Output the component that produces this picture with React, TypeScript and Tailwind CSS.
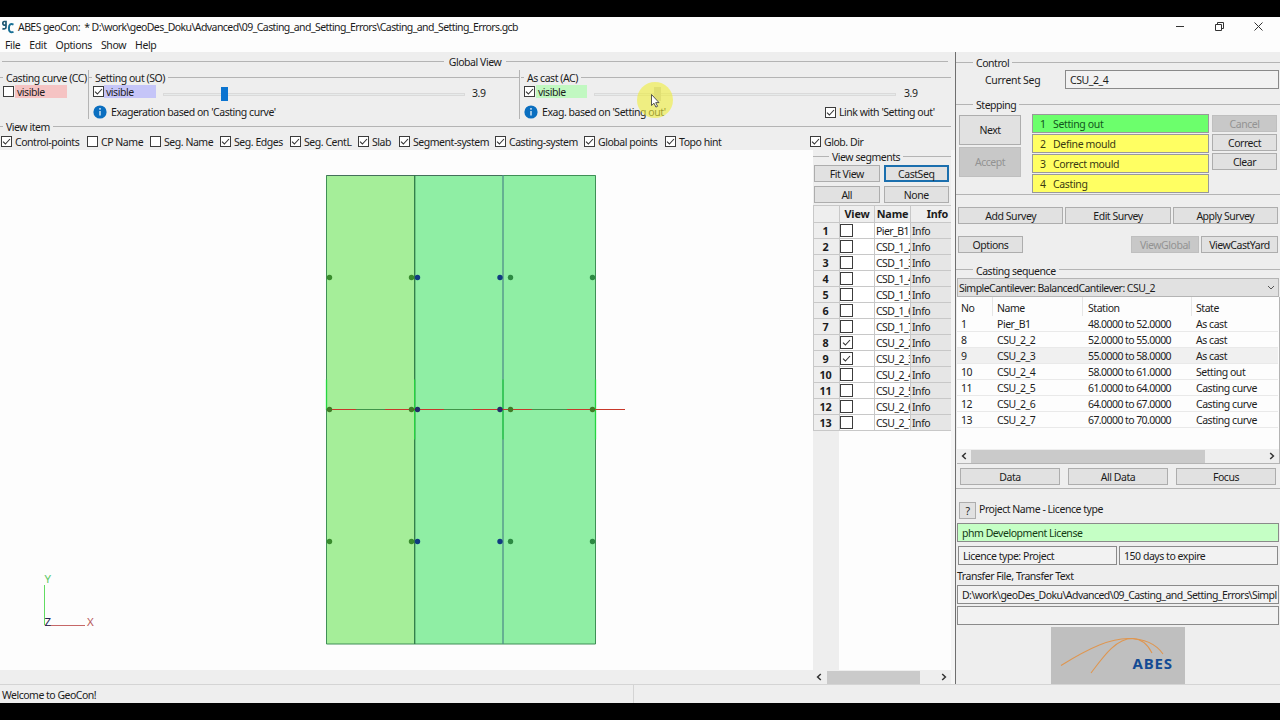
import type { ReactNode } from "react";
import clsx from "clsx";

const viewItems = [
  { label: "Control-points", on: true, width: "w-[86px]" },
  { label: "CP Name", on: false, width: "w-[63px]" },
  { label: "Seg. Name", on: false, width: "w-[70px]" },
  { label: "Seg. Edges", on: true, width: "w-[70px]" },
  { label: "Seg. CentL", on: true, width: "w-[68px]" },
  { label: "Slab", on: true, width: "w-[41px]" },
  { label: "Segment-system", on: true, width: "w-[96px]" },
  { label: "Casting-system", on: true, width: "w-[89px]" },
  { label: "Global points", on: true, width: "w-[81px]" },
  { label: "Topo hint", on: true, width: "w-[145px]" },
  { label: "Glob. Dir", on: true, width: "w-[80px]" },
];

const segments = [
  { name: "Pier_B1", on: false },
  { name: "CSD_1_2", on: false },
  { name: "CSD_1_3", on: false },
  { name: "CSD_1_4", on: false },
  { name: "CSD_1_5", on: false },
  { name: "CSD_1_6", on: false },
  { name: "CSD_1_7", on: false },
  { name: "CSU_2_2", on: true },
  { name: "CSU_2_3", on: true },
  { name: "CSU_2_4", on: false },
  { name: "CSU_2_5", on: false },
  { name: "CSU_2_6", on: false },
  { name: "CSU_2_7", on: false },
];

const sequence = [
  { no: 1, name: "Pier_B1", station: "48.0000 to 52.0000", state: "As cast" },
  { no: 8, name: "CSU_2_2", station: "52.0000 to 55.0000", state: "As cast" },
  { no: 9, name: "CSU_2_3", station: "55.0000 to 58.0000", state: "As cast" },
  { no: 10, name: "CSU_2_4", station: "58.0000 to 61.0000", state: "Setting out" },
  { no: 11, name: "CSU_2_5", station: "61.0000 to 64.0000", state: "Casting curve" },
  { no: 12, name: "CSU_2_6", station: "64.0000 to 67.0000", state: "Casting curve" },
  { no: 13, name: "CSU_2_7", station: "67.0000 to 70.0000", state: "Casting curve" },
];

const steps = ["Setting out", "Define mould", "Correct mould", "Casting"];

function Box({ on, className }: { on: boolean; className?: string }) {
  return (
    <span className={clsx("flex shrink-0 items-center justify-center border border-[#3c3c3c] bg-white", className ?? "h-[11px] w-[11px]")}>
      {on && (
        <svg viewBox="0 0 9 9" className="h-[9px] w-[9px]" fill="none" stroke="#333" strokeWidth="1.1">
          <path d="M1 4.6 3.4 7 8 2" />
        </svg>
      )}
    </span>
  );
}

// Heading with a rule on both sides, the left one having a fixed length
function Group({ label, lead, className }: { label: string; lead: string; className?: string }) {
  return (
    <div className={clsx("flex items-center", className ?? "h-4")}>
      <span className={clsx("-mt-[2px] h-px shrink-0 bg-[#b4b4b4]", lead)} />
      <span className="px-[3px] whitespace-nowrap">{label}</span>
      <span className="-mt-[2px] h-px flex-1 bg-[#b4b4b4]" />
    </div>
  );
}

function Btn({ children, className, kind = "normal" }: { children: ReactNode; className?: string; kind?: "normal" | "disabled" | "focused" }) {
  return (
    <button
      className={clsx(
        "flex shrink-0 items-center justify-center",
        kind === "normal" && "border border-[#adadad] bg-[#e1e1e1]",
        kind === "disabled" && "border border-[#bfbfbf] bg-[#c8c8c8] text-[#939393]",
        kind === "focused" && "border-2 border-[#1b6fae] bg-[#e1e1e1]",
        className,
      )}
    >
      {children}
    </button>
  );
}

function Field({ children, className }: { children?: ReactNode; className?: string }) {
  return (
    <div className={clsx("flex h-[19px] shrink-0 items-center overflow-hidden border border-[#8a8a8a] pl-1", className)}>
      {children}
    </div>
  );
}

function InfoIcon() {
  return (
    <svg viewBox="0 0 14 14" className="h-[14px] w-[14px] shrink-0">
      <circle cx="7" cy="7" r="6.6" fill="#0b6fc0" />
      <path d="M7 5.9v4.6" stroke="#fff" strokeWidth="1.2" />
      <circle cx="7" cy="3.9" r="0.8" fill="#fff" />
    </svg>
  );
}

function Chevron({ left }: { left?: boolean }) {
  return (
    <svg viewBox="0 0 6 8" className="h-2 w-[6px] shrink-0" fill="none" stroke="#333" strokeWidth="1.5">
      <path d={left ? "M4.8 1 1.6 4l3.2 3" : "M1.2 1l3.2 3-3.2 3"} />
    </svg>
  );
}

function Viewport() {
  const columns = [329.5, 411.5, 417.5, 500, 510.5, 592.5];
  return (
    <svg viewBox="0 150 813 520" className="h-[520px] w-[813px] shrink-0 bg-[#fdfdfd]">
      <rect x="327" y="175" width="88" height="469" fill="#a5ee99" />
      <rect x="415" y="175" width="181" height="469" fill="#8feea4" />
      <g fill="none" strokeWidth="1">
        <path d="M326.5 175.5H595.5V644H326.5Z" stroke="#3f8f56" />
        <path d="M326.5 175.5H503" stroke="#44705a" />
        <path d="M414.7 175V644" stroke="#2f7a48" strokeWidth="1.3" />
        <path d="M503 175V644" stroke="#4f8f88" strokeWidth="1.3" />
        <path d="M326.5 379.5V410M414.7 379.5V439.5M503 379.5V439.5M595.5 379.5V439.5" stroke="#25d540" strokeWidth="1.3" />
      </g>
      <rect x="326" y="409" width="270" height="1" fill="#41944a" />
      <rect x="331" y="409" width="25" height="1" fill="#c8382a" />
      <rect x="385" y="409" width="59" height="1" fill="#c8382a" />
      <rect x="473" y="409" width="59" height="1" fill="#c8382a" />
      <rect x="567" y="409" width="58" height="1" fill="#c8382a" />
      {columns.map((x, i) =>
        [277.5, 409.5, 541.5].map((y) => (
          <circle
            key={`${x}-${y}`}
            cx={x}
            cy={y}
            r="2.7"
            fill={i === 2 || i === 3 ? (y === 409.5 ? "#242c68" : "#103b80") : y === 409.5 ? "#407c26" : i > 3 ? "#2d8a43" : "#398b2d"}
          />
        )),
      )}
      <rect x="44" y="585" width="1" height="40" fill="#62dc62" />
      <rect x="45" y="625" width="40" height="1" fill="#c66767" />
      <g fontSize="11.5">
        <text x="44.5" y="583" fill="#62c968">Y</text>
        <text x="44.5" y="626" fill="#252552">Z</text>
        <text x="87" y="626" fill="#b85a5a">X</text>
      </g>
    </svg>
  );
}

function ViewSettings() {
  return (
    <div className="h-[98px] shrink-0 bg-[#eeeeee]">
      <div className="flex h-[18px] items-center pt-[2px] pr-[7px] pl-[2px]">
        <span className="-mt-px h-px w-[442px] bg-[#b4b4b4]" />
        <span className="w-[62px] text-center">Global View</span>
        <span className="-mt-px h-px flex-1 bg-[#b4b4b4]" />
      </div>

      <div className="flex h-[49px] pr-1">
        <div className="w-[88px]">
          <Group label="Casting curve (CC)" lead="w-[3px]" />
          <div className="-mt-px flex h-[13px] items-center pl-[3px]">
            <Box on={false} />
            <span className="ml-px flex h-[13px] w-[52px] items-center bg-[#f5c3c3] pl-[2px]">visible</span>
          </div>
        </div>

        <div className="w-[431px] border-l border-[#b4b4b4]">
          <Group label="Setting out (SO)" lead="w-[3px]" />
          <div className="-mt-px flex h-[13px] items-center pl-[4px]">
            <Box on />
            <span className="flex h-[13px] w-[52px] items-center bg-[#c5c5f8] pl-[2px]">visible</span>
            <span className="relative mt-[5px] ml-[7px] h-[3px] w-[302px] border border-[#dadada] bg-[#e7eaea]">
              <span className="absolute -top-[7px] left-[57px] h-[14px] w-[7px] bg-[#0b74d0]" />
            </span>
            <span className="mt-[3px] ml-[7px]">3.9</span>
          </div>
          <div className="mt-[7px] flex h-[14px] items-center gap-1 pl-[4px]">
            <InfoIcon />
            <span>Exageration based on 'Casting curve'</span>
          </div>
        </div>

        <div className="flex-1 border-l border-[#b4b4b4]">
          <Group label="As cast (AC)" lead="ml-[1px] w-[3px]" />
          <div className="-mt-px flex h-[13px] items-center pl-[4px]">
            <Box on />
            <span className="ml-px flex h-[13px] w-[51px] items-center bg-[#c1f8c1] pl-[2px]">visible</span>
            <span className="relative mt-[5px] ml-[7px] h-[3px] w-[302px] border border-[#dadada] bg-[#e7eaea]">
              <span className="absolute -top-[7px] left-[59px] h-[14px] w-[7px] bg-[#c8c8c8]" />
            </span>
            <span className="mt-[3px] ml-[8px]">3.9</span>
          </div>
          <div className="mt-[7px] flex h-[14px] items-center gap-1 pl-[4px]">
            <InfoIcon />
            <span className="w-[279px]">Exag. based on 'Setting out'</span>
            <Box on />
            <span className="-ml-[1px]">Link with 'Setting out'</span>
          </div>
        </div>
      </div>

      <Group label="View item" lead="w-[3px]" className="mr-1 h-4" />
      <div className="-mt-px flex h-[15px] items-center pl-px whitespace-nowrap">
        {viewItems.map((item) => (
          <label key={item.label} className={clsx("flex shrink-0 items-center gap-[3px]", item.width)}>
            <Box on={item.on} />
            {item.label}
          </label>
        ))}
      </div>
    </div>
  );
}

function SegmentPanel() {
  return (
    <div className="flex w-[138px] shrink-0 flex-col bg-[#eeeeee]">
      <Group label="View segments" lead="w-[16px]" className="-mt-px h-4" />
      <div className="grid h-[40px] grid-cols-2 content-start gap-1 pr-[2px] pl-px">
        <Btn className="h-[17px]">Fit View</Btn>
        <Btn kind="focused" className="h-[17px]">CastSeq</Btn>
        <Btn className="h-[17px]">All</Btn>
        <Btn className="h-[17px]">None</Btn>
      </div>
      <div className="flex h-[18px] items-center border-y border-[#c8c8c8] text-[10.8px] font-bold tracking-[-0.2px]">
        <span className="h-full w-[27px] border-x border-[#c8c8c8]" />
        <span className="flex h-full w-[35px] items-center justify-center border-r border-[#c8c8c8]">View</span>
        <span className="flex h-full w-[36px] items-center justify-center border-r border-[#c8c8c8]">Name</span>
        <span className="flex-1 pr-[3px] text-right">Info</span>
      </div>
      {segments.map((seg, i) => (
        <div key={seg.name} className="flex h-4 shrink-0 border-b border-[#c8c8c8] bg-white">
          <span className="flex w-[27px] items-center justify-center border-x border-[#c8c8c8] bg-[#eeeeee] pr-[2px] text-[10.8px] font-bold tracking-[-0.2px]">
            {i + 1}
          </span>
          <span className="flex w-[35px] items-center border-r border-[#c8c8c8]">
            <Box on={seg.on} className="h-[13px] w-[13px]" />
          </span>
          <span className="flex w-[36px] items-center overflow-hidden border-r border-[#c8c8c8] pl-px tracking-[-0.55px]">{seg.name}</span>
          <span className="flex flex-1 items-center bg-[#e6e6e6] pl-px">Info</span>
        </div>
      ))}
      <div className="flex-1 bg-[#fdfdfd]">
        <div className="h-full w-[26px] bg-[#eeeeee]" />
      </div>
      <div className="flex h-[14px] items-center bg-[#eeeeee] pr-1 pl-[3px]">
        <Chevron left />
        <span className="ml-[5px] h-[13px] w-[93px] bg-[#cacaca]" />
        <span className="flex-1" />
        <Chevron />
      </div>
    </div>
  );
}

function StepList() {
  return (
    <div className="ml-[11px] flex w-[177px] flex-col gap-px">
      {steps.map((step, i) => (
        <div
          key={step}
          className={clsx(
            "flex h-[19px] items-center border border-[#999] pl-[7px] tracking-[-0.35px]",
            i === 0 ? "bg-[#6cff6c] text-[#12551c]" : "bg-[#ffff62] text-[#3a3a12]",
          )}
        >
          <span className="w-[13px]">{i + 1}</span>
          {step}
        </div>
      ))}
    </div>
  );
}

function SequenceTable() {
  return (
    <div className="ml-px flex h-[167px] shrink-0 flex-col border-r border-b border-[#b4b4b4] bg-[#fdfdfd]">
      <div className="flex h-[19px] shrink-0 items-center pl-1">
        <span className="flex h-full w-[32px] items-center border-r border-[#e6e6e6] pt-[3px]">No</span>
        <span className="flex h-full w-[90px] items-center border-r border-[#e6e6e6] pt-[3px] pl-1">Name</span>
        <span className="flex h-full w-[109px] items-center border-r border-[#e6e6e6] pt-[3px] pl-[5px]">Station</span>
        <span className="pt-[3px] pl-1">State</span>
      </div>
      {sequence.map((row) => (
        <div
          key={row.no}
          className={clsx("mr-px flex h-4 items-center border-b border-[#e9e9e9] pl-1", row.no === 9 && "bg-[#f0f0f0]")}
        >
          <span className="w-[36px]">{row.no}</span>
          <span className="w-[91px]">{row.name}</span>
          <span className="w-[108px] tracking-[-0.57px]">{row.station}</span>
          <span>{row.state}</span>
        </div>
      ))}
      <span className="flex-1" />
      <div className="flex h-[14px] items-center bg-[#eeeeee] pr-[4px] pl-1">
        <Chevron left />
        <span className="ml-[4px] h-[13px] w-[234px] bg-[#cacaca]" />
        <span className="flex-1" />
        <Chevron />
      </div>
    </div>
  );
}

function Logo() {
  return (
    <div className="mt-[2px] ml-[95px] h-[57px] w-[134px] shrink-0 bg-[#bfbfbf]">
      <svg viewBox="0 0 134 57" className="h-full w-full" fill="none" stroke="#df9650" strokeWidth="1.1">
        <path d="M10 38.500C40 20 60 11.500 77 11.500C94 11.500 105 17 112 27" />
        <path d="M41 46C55 24 68 10.500 84 10.500C98 10.500 107 18 101 26" stroke="none" />
        <path d="M40 46C52 30 65 11 82 11.500C91 12 97 18 101 26" />
        <text x="81.5" y="41.5" fontSize="15" fontWeight="bold" fill="#134b94" stroke="none" textLength="39">
          ABES
        </text>
      </svg>
    </div>
  );
}

function ControlPanel() {
  return (
    <div className="flex w-[325px] shrink-0 flex-col border-l border-[#6f6f6f] bg-[#eeeeee]">
      <Group label="Control" lead="w-[17px]" className="mt-[3px] h-4" />
      <div className="-mt-px flex h-[19px] items-center pl-[29px]">
        <span className="w-[80px] pt-px tracking-[-0.3px]">Current Seg</span>
        <Field className="mr-px flex-1 bg-[#f2f2f2]">CSU_2_4</Field>
      </div>
      <Group label="Stepping" lead="w-[17px]" className="mt-[8px] h-4" />

      <div className="-mt-px flex h-[83px] border-b border-[#b4b4b4] pt-[2px] pl-[3px]">
        <div className="mt-px flex flex-col gap-[2px]">
          <Btn className="h-[30px] w-[62px]">Next</Btn>
          <Btn kind="disabled" className="h-[30px] w-[62px]">Accept</Btn>
        </div>
        <StepList />
        <div className="mt-px ml-[3px] flex flex-col gap-[2px]">
          <Btn kind="disabled" className="h-[17px] w-[65px]">Cancel</Btn>
          <Btn className="h-[17px] w-[65px]">Correct</Btn>
          <Btn className="h-[17px] w-[65px]">Clear</Btn>
        </div>
      </div>

      <div className="mt-[12px] grid h-[17px] grid-cols-3 gap-[2px] px-[2px]">
        <Btn>Add Survey</Btn>
        <Btn>Edit Survey</Btn>
        <Btn>Apply Survey</Btn>
      </div>
      <div className="mt-[12px] flex h-[17px] gap-[2px] px-[2px]">
        <Btn className="w-[65px]">Options</Btn>
        <span className="flex-1" />
        <Btn kind="disabled" className="w-[68px]">ViewGlobal</Btn>
        <Btn className="w-[77px]">ViewCastYard</Btn>
      </div>

      <Group label="Casting sequence" lead="w-[17px]" className="mt-[10px] h-[15px]" />
      <div className="mr-px ml-px flex h-[19px] shrink-0 items-center justify-between border border-[#b4b4b4] bg-[#e1e1e1] pr-[3px] pl-px tracking-[-0.55px]">
        SimpleCantilever: BalancedCantilever: CSU_2
        <svg viewBox="0 0 8 6" className="h-[6px] w-2" fill="none" stroke="#555">
          <path d="M1 1l3 3 3-3" />
        </svg>
      </div>
      <SequenceTable />

      <div className="flex h-[25px] shrink-0 gap-2 border-b border-[#b4b4b4] pt-1 pr-1 pl-[4px]">
        <Btn className="h-[17px] w-[100px]">Data</Btn>
        <Btn className="h-[17px] w-[100px]">All Data</Btn>
        <Btn className="h-[17px] w-[100px]">Focus</Btn>
      </div>

      <div className="mt-[13px] flex h-[17px] shrink-0 pl-[3px]">
        <Btn className="h-[17px] w-[17px]">?</Btn>
        <span className="ml-[3px]">Project Name - Licence type</span>
      </div>
      <Field className="mx-px mt-[4px] bg-[#c5ffc5] text-[#143a14]">phm Development License</Field>
      <div className="mt-[4px] flex gap-[2px] px-[2px]">
        <Field className="flex-1 bg-[#f2f2f2]">Licence type: Project</Field>
        <Field className="flex-1 bg-[#f2f2f2]">150 days to expire</Field>
      </div>
      <div className="mt-[2px] flex h-[18px] items-center pl-px">Transfer File, Transfer Text</div>
      <Field className="mx-px bg-[#f2f2f2] tracking-[-0.55px] whitespace-nowrap">
        {"D:\\work\\geoDes_Doku\\Advanced\\09_Casting_and_Setting_Errors\\Simpl"}
      </Field>
      <Field className="mx-px mt-[2px] bg-[#f2f2f2]" />
      <Logo />
    </div>
  );
}

function Pointer() {
  return (
    <svg viewBox="0 0 38 38" className="pointer-events-none absolute top-[81px] left-[636px] h-[38px] w-[38px]">
      <circle cx="19" cy="19" r="18" fill="#f0ee3a" fillOpacity="0.6" />
      <path d="M15.5 13.5v11l2.5-2.3 1.9 3.9 1.7-.8-1.9-3.7h3.3z" fill="#fff" stroke="#444" strokeWidth="0.9" />
    </svg>
  );
}

export default function App() {
  return (
    <div className="relative flex h-[720px] w-[1280px] flex-col overflow-hidden bg-black py-[17px] font-['Noto_Sans','Open_Sans',sans-serif] text-[10.5px] leading-[14px] tracking-[-0.46px] text-[#1c1c1c]">
      <header className="h-[35px] shrink-0 bg-[#fdfdfd]">
        <div className="flex h-[19px] items-center">
          <svg viewBox="0 0 18 16" className="h-4 w-[18px] shrink-0" fill="none" strokeWidth="1.7">
            <path d="M6 6.2H4.2C2.4 6.2 2.4 2.5 4.2 2.5H6V8.2C6 10 4 10.2 2.4 9.6" stroke="#1f5873" />
            <path d="M13.5 5.6C10.5 4.2 8.9 5.7 8.9 9.2S10.5 14 13.5 12.9" stroke="#187096" strokeWidth="2" />
          </svg>
          <span className="flex-1 tracking-[-0.58px] whitespace-pre">{"ABES geoCon:  * D:\\work\\geoDes_Doku\\Advanced\\09_Casting_and_Setting_Errors\\Casting_and_Setting_Errors.gcb"}</span>
          <svg viewBox="0 0 90 12" className="mr-[15px] h-3 w-[90px]" fill="none" stroke="#333">
            <path d="M1 5.5h8" />
            <path d="M40.5 3.5h6v6h-6zM42.5 3.5v-2h6v6h-2" />
            <path d="M79.5 1.5l8 8M87.5 1.5l-8 8" />
          </svg>
        </div>
        <nav className="flex h-4 items-center gap-[9px] pt-[2px] pl-[5px] tracking-[-0.38px]">
          <span>File</span>
          <span>Edit</span>
          <span>Options</span>
          <span>Show</span>
          <span>Help</span>
        </nav>
      </header>

      <div className="flex h-[632px] shrink-0">
        <main className="flex w-[955px] shrink-0 flex-col bg-[#eeeeee]">
          <ViewSettings />
          <div className="flex h-[534px]">
            <Viewport />
            <SegmentPanel />
            <span className="flex-1 bg-[#f5f5f5]" />
          </div>
        </main>
        <ControlPanel />
      </div>

      <footer className="flex h-[19px] shrink-0 items-center border-t border-[#d4d4d4] bg-[#eeeeee]">
        <span className="flex h-full w-[634px] items-center border-r border-[#d4d4d4] pt-[2px] pl-[2px] tracking-[-0.5px]">Welcome to GeoCon!</span>
      </footer>
      <Pointer />
    </div>
  );
}
